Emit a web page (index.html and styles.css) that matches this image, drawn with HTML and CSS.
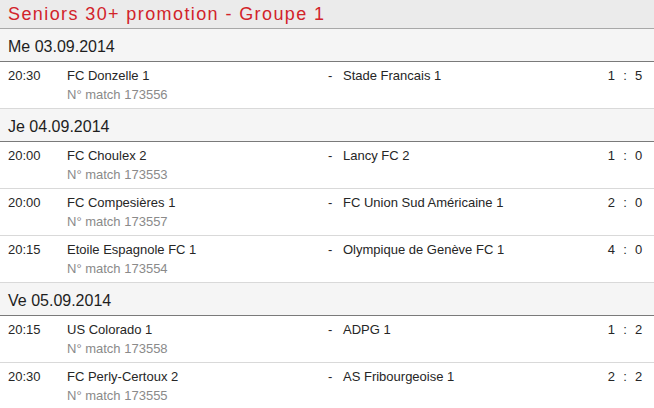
FILE: index.html
```html
<!DOCTYPE html>
<html lang="fr">
<head>
<meta charset="utf-8">
<title>Seniors 30+ promotion - Groupe 1</title>
<link rel="stylesheet" href="styles.css">
</head>
<body>
<div class="title">Seniors 30+ promotion - Groupe 1</div>

<section class="day">
  <div class="day-head">Me 03.09.2014</div>
  <div class="match">
    <span class="time">20:30</span><span class="home">FC Donzelle 1</span><span class="sep">-</span><span class="away">Stade Francais 1</span><span class="sh">1</span><span class="colon">:</span><span class="sa">5</span>
    <span class="num">N° match 173556</span>
  </div>
</section>

<section class="day">
  <div class="day-head">Je 04.09.2014</div>
  <div class="match">
    <span class="time">20:00</span><span class="home">FC Choulex 2</span><span class="sep">-</span><span class="away">Lancy FC 2</span><span class="sh">1</span><span class="colon">:</span><span class="sa">0</span>
    <span class="num">N° match 173553</span>
  </div>
  <div class="match">
    <span class="time">20:00</span><span class="home">FC Compesières 1</span><span class="sep">-</span><span class="away">FC Union Sud Américaine 1</span><span class="sh">2</span><span class="colon">:</span><span class="sa">0</span>
    <span class="num">N° match 173557</span>
  </div>
  <div class="match">
    <span class="time">20:15</span><span class="home">Etoile Espagnole FC 1</span><span class="sep">-</span><span class="away">Olympique de Genève FC 1</span><span class="sh">4</span><span class="colon">:</span><span class="sa">0</span>
    <span class="num">N° match 173554</span>
  </div>
</section>

<section class="day">
  <div class="day-head">Ve 05.09.2014</div>
  <div class="match">
    <span class="time">20:15</span><span class="home">US Colorado 1</span><span class="sep">-</span><span class="away">ADPG 1</span><span class="sh">1</span><span class="colon">:</span><span class="sa">2</span>
    <span class="num">N° match 173558</span>
  </div>
  <div class="match">
    <span class="time">20:30</span><span class="home">FC Perly-Certoux 2</span><span class="sep">-</span><span class="away">AS Fribourgeoise 1</span><span class="sh">2</span><span class="colon">:</span><span class="sa">2</span>
    <span class="num">N° match 173555</span>
  </div>
</section>
</body>
</html>
```

FILE: styles.css
```css
html, body {
  margin: 0;
  padding: 0;
  background: #ffffff;
}

body {
  font-family: "Liberation Sans", Arial, sans-serif;
  color: #262626;
  width: 654px;
}

.title {
  height: 28px;
  line-height: 28px;
  padding-left: 8px;
  background: #ebebeb;
  border-bottom: 1px solid #a8a8a8;
  color: #d2232a;
  font-size: 18px;
  letter-spacing: 1.4px;
  white-space: nowrap;
}

.day-head {
  height: 20px;
  padding: 8px 0 4px 8px;
  line-height: 20px;
  font-size: 16px;
  background: #f5f5f5;
  border-bottom: 1px solid #7a7a7a;
  color: #1e1e1e;
}

.match {
  display: grid;
  grid-template-columns: 59px 261px 15px 1fr 20px 20px 19px;
  grid-template-rows: 19px 19px;
  padding: 4px 0 4px 8px;
  font-size: 13px;
  line-height: 19px;
  border-bottom: 1px solid #d9d9d9;
  white-space: nowrap;
}

.time, .home, .sep, .away, .sh, .colon, .sa {
  grid-row: 1;
}

.sh {
  text-align: right;
}

.colon {
  text-align: center;
}

.sa {
  text-align: left;
}

.num {
  grid-row: 2;
  grid-column: 2 / 4;
  color: #8a8a8a;
}
```
